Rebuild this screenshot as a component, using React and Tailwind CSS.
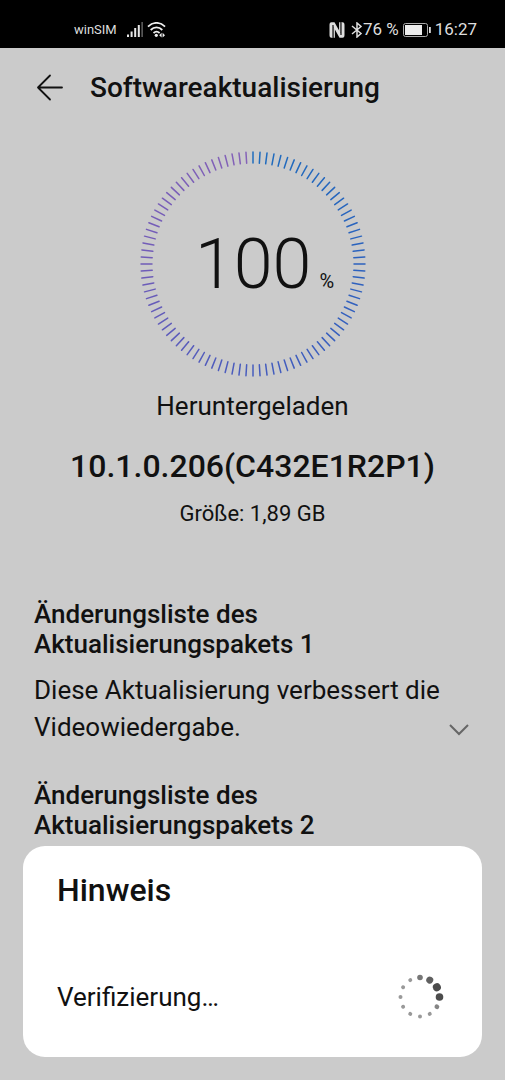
import React from "react";

const TICKS = 100;

const COLOR_STOPS = [
  [0, [30, 108, 190]],
  [25, [44, 98, 190]],
  [50, [70, 92, 190]],
  [75, [112, 92, 184]],
  [100, [134, 98, 184]],
];

function tickColor(i) {
  const k = Math.min(Math.floor(i / 25), 3);
  const [start, a] = COLOR_STOPS[k];
  const b = COLOR_STOPS[k + 1][1];
  const t = (i - start) / 25;
  return `rgb(${a.map((v, n) => Math.round(v + (b[n] - v) * t)).join(",")})`;
}

function StatusBar() {
  return (
    <div className="flex h-12 items-center justify-between bg-black pt-3 pr-7 pl-[74px] text-[#dedede]">
      <div className="flex items-center">
        <span className="text-[13px]">winSIM</span>
        <svg className="ml-2.5 h-4 w-4" viewBox="0 0 16 16" fill="#e8e8e8" aria-label="Signal">
          <rect x="0" y="12.500" width="2" height="2.500" />
          <rect x="3.600" y="9.500" width="2" height="5.500" />
          <rect x="7.200" y="6" width="2" height="9" />
          <rect x="10.800" y="3" width="2" height="12" />
          <rect x="14.300" y="0" width="1.700" height="15" fill="#555" />
        </svg>
        <svg className="ml-1 h-4 w-5" viewBox="0 0 20 16" fill="none" stroke="#f0f0f0" strokeWidth="1.8" aria-label="WLAN">
          <path d="M1 4.600C6-.4 13-.4 18 4.600M3.700 8c3.400-3.400 8.200-3.400 11.600 0M6.500 11c1.900-1.700 4.200-1.700 6.100 0" />
          <circle cx="9.300" cy="13.300" r="1.600" fill="#f0f0f0" stroke="none" />
          <path d="M14.600 10.800v4.800l-2.400-2.400zM15.600 10.800v4.800l2.400-2.400z" fill="#f0f0f0" stroke="none" />
        </svg>
      </div>
      <div className="flex items-center text-[17px]">
        <svg className="h-4 w-4" viewBox="0 0 16 16" aria-label="NFC">
          <path d="M5.500.3H2.500C1 .3.500 1.500.5 3v10c0 1.500.5 2.700 2 2.700h1.700V4.500l6.300 11.200h3c1.500 0 2-1.200 2-2.700V3c0-1.500-.5-2.700-2-2.700h-1.700v11.200z" fill="#dedede" />
          <path d="M4 3v12.700M12 .3V13" stroke="#000" strokeWidth="1.100" />
          <path d="M5.300 5.500v10.200M10.700.3v10.200" stroke="#dedede" strokeWidth="1.200" />
        </svg>
        <svg className="ml-1.5 h-4 w-3" viewBox="0 0 12 16" fill="none" stroke="#dedede" strokeWidth="1.500" aria-label="Bluetooth">
          <path d="M1 4l9 7.500-4 3.500V1l4 3.500L1 12" />
        </svg>
        <span>76 %</span>
        <svg className="mx-1 h-4 w-7" viewBox="0 0 28 16" aria-label="Akku">
          <rect x=".5" y="1.500" width="24" height="13" rx="2" fill="none" stroke="#aaa" />
          <rect x="2" y="3" width="17" height="10" fill="#ececec" />
          <rect x="26" y="5" width="1.800" height="6" fill="#dedede" />
        </svg>
        <span>16:27</span>
      </div>
    </div>
  );
}

function ProgressRing() {
  return (
    <div className="grid h-57 w-57 place-items-center self-center">
      <svg className="col-start-1 row-start-1 h-full w-full" viewBox="-114 -114 228 228" strokeWidth="1.500" strokeLinecap="round" aria-hidden="true">
        {Array.from({ length: TICKS }, (_, i) => (
          <line key={i} x1="0" y1="-112" x2="0" y2="-101" stroke={tickColor(i)} transform={`rotate(${i * 3.6})`} />
        ))}
      </svg>
      <p className="col-start-1 row-start-1 flex items-baseline pl-6">
        <span className="text-[70px] leading-none font-light">100</span>
        <span className="ml-2 text-[20px]">%</span>
      </p>
    </div>
  );
}

function ChangeList({ number, children }) {
  return (
    <section>
      <h3 className="text-[26px] leading-[30px] font-medium">
        Änderungsliste des
        <br />
        Aktualisierungspakets {number}
      </h3>
      {children}
    </section>
  );
}

function Spinner() {
  const radii = [2.8, 3.500, 4, 3.800, 2.400, 2, 2, 2, 2, 2, 2, 2];
  const fills = ["#777", "#606060", "#4c4c4c", "#4c4c4c", "#858585", "#999", "#999", "#999", "#999", "#999", "#999", "#999"];
  return (
    <svg className="mr-1 h-12 w-12" viewBox="-24 -24 48 48" role="status" aria-label="Verifizierung">
      {radii.map((r, i) => (
        <circle key={i} cx="0" cy="-19.500" r={r} fill={fills[i]} transform={`rotate(${i * 30})`} />
      ))}
    </svg>
  );
}

export default function App() {
  return (
    <div className="relative flex h-screen flex-col overflow-hidden bg-[#cbcbcb] font-[Roboto,sans-serif] text-[#111]">
      <StatusBar />
      <header className="flex h-20 items-center gap-[26px] pl-9">
        <button type="button" aria-label="Zurück">
          <svg className="h-7 w-7" viewBox="0 0 28 28" fill="none" stroke="#111" strokeWidth="1.800" strokeLinecap="round" strokeLinejoin="round">
            <path d="M26 13.500H2M14 1.500L2 13.500l12 12" />
          </svg>
        </button>
        <h1 className="text-[28px] font-medium">Softwareaktualisierung</h1>
      </header>
      <main className="flex flex-col px-[34px] pt-[22px]">
        <ProgressRing />
        <p className="mt-3 text-center text-[26px] leading-8">Heruntergeladen</p>
        <h2 className="mt-6 text-center text-[32px] leading-10 font-medium">10.1.0.206(C432E1R2P1)</h2>
        <p className="mt-3 text-center text-[22px] leading-8">Größe: 1,89 GB</p>
        <div className="mt-[69px] flex flex-col gap-[34px]">
          <ChangeList number={1}>
            <div className="mt-[13px] flex items-end justify-between">
              <p className="text-[26px] leading-[37px]">
                Diese Aktualisierung verbessert die Videowiedergabe.
              </p>
              <button type="button" aria-label="Mehr anzeigen" className="mr-0.5 -ml-6 pb-1.5">
                <svg className="h-5 w-5" viewBox="0 0 20 20" fill="none" stroke="#666" strokeWidth="2">
                  <path d="M1 5l9 9 9-9" />
                </svg>
              </button>
            </div>
          </ChangeList>
          <ChangeList number={2} />
        </div>
      </main>
      <section role="dialog" aria-labelledby="notice-title" className="absolute inset-x-[23px] bottom-[23px] rounded-[22px] bg-white px-[34px] pt-6 pb-9">
        <h2 id="notice-title" className="text-[32px] leading-10 font-medium">Hinweis</h2>
        <div className="mt-[63px] flex items-center justify-between">
          <p className="text-[26px]">Verifizierung…</p>
          <Spinner />
        </div>
      </section>
    </div>
  );
}
